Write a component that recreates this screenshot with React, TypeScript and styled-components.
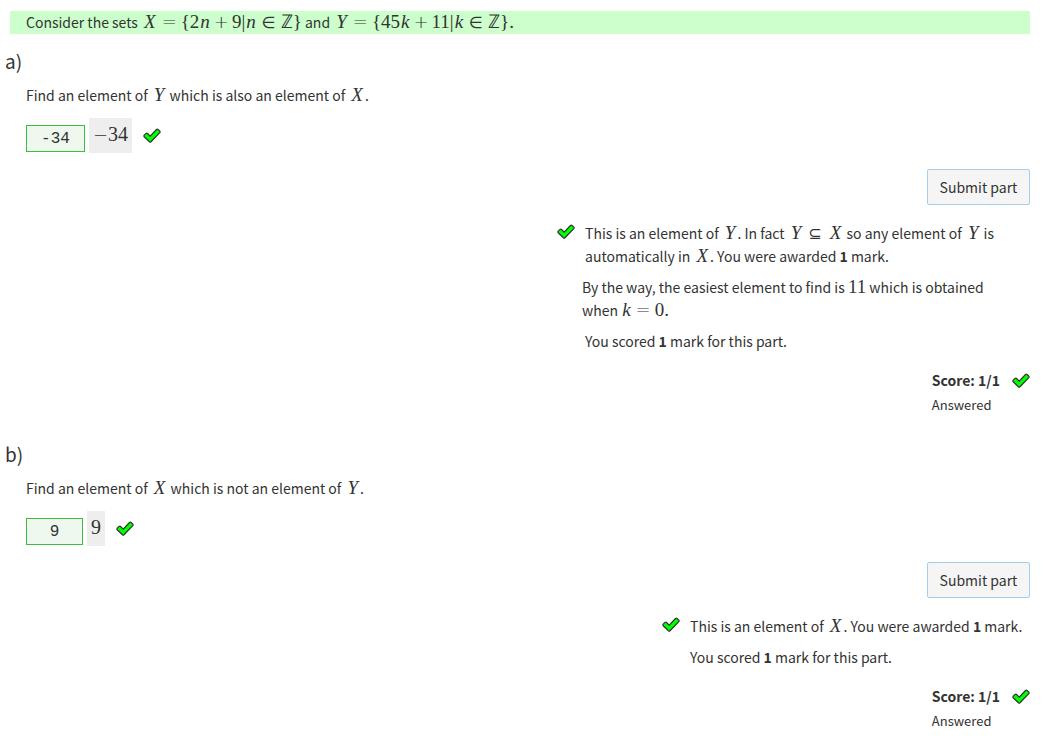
import React from "react";
import styled, { createGlobalStyle } from "styled-components";

const GlobalStyle = createGlobalStyle`
  * { box-sizing: border-box; }
  body {
    margin: 0;
    background: #ffffff;
    color: #333333;
    font-family: "Noto Sans CJK SC", "Noto Sans", sans-serif;
    font-size: 14px;
    line-height: 23px;
  }
`;

const Page = styled.main`
  padding: 11px 27px 0 5px;
`;

const Statement = styled.p`
  margin: 0 0 0 5px;
  padding: 0 16px;
  background: #ccffcc;
`;

const Part = styled.section`
  padding: 14px 0 9px;
`;

const PartTitle = styled.h2`
  margin: 0 0 10px;
  font-size: 19px;
  font-weight: 400;
  line-height: 26px;
`;

const PartBody = styled.div`
  padding-left: 21px;
`;

const Prompt = styled.p`
  margin: 0 0 11px;
`;

const AnswerRow = styled.div`
  display: flex;
  align-items: flex-start;
  gap: 4px;
  height: 35px;
  margin-bottom: 16px;
`;

const AnswerInput = styled.input<{ $width: number }>`
  width: ${(p) => p.$width}px;
  height: 27px;
  margin-top: 7px;
  padding: 0;
  border: 1px solid #3cbe3c;
  background: #eef8ee;
  color: #333333;
  font-family: "Liberation Mono", monospace;
  font-size: 16px;
  text-align: center;
`;

const Preview = styled.output`
  padding: 0 4px;
  background: #eeeeee;
  line-height: 35px;
`;

const RowMark = styled.span`
  display: flex;
  align-items: center;
  height: 35px;
  margin-left: 7px;
`;

const PartFooter = styled.div`
  display: flex;
  flex-direction: column;
  align-items: flex-end;
`;

const SubmitButton = styled.button`
  min-width: 103px;
  height: 36px;
  padding: 0 11px;
  border: 1px solid #a3cfec;
  border-radius: 2px;
  background: #f5f5f5;
  color: #333333;
  font: inherit;
`;

const Feedback = styled.div`
  display: flex;
  gap: 7px;
  max-width: 473px;
  margin-top: 17px;
`;

const FeedbackMark = styled.span`
  display: flex;
  height: 18px;
  align-items: center;
`;

const Messages = styled.div`
  display: flex;
  flex-direction: column;
  gap: 8px;
  min-width: 343px;
`;

const Message = styled.p<{ $indent?: boolean }>`
  margin: 0;
  padding-left: ${(p) => (p.$indent ? 3 : 0)}px;
`;

const Score = styled.div`
  margin-top: 16px;
`;

const ScoreLine = styled.div`
  display: flex;
  align-items: center;
  gap: 12px;
  font-weight: 700;
`;

const Status = styled.div`
  font-size: 13px;
  line-height: 26px;
`;

const MathText = styled.span<{ $large?: boolean }>`
  font-family: "Liberation Serif", serif;
  font-size: ${(p) => (p.$large ? 20 : 19)}px;
  line-height: 1;
  white-space: nowrap;
`;

const Var = styled.i<{ $cap?: boolean }>`
  margin: 0 ${(p) => (p.$cap ? 2 : 1)}px 0 ${(p) => (p.$cap ? 3 : 1)}px;
  font-style: italic;
`;

const Op = styled.span<{ $gap?: number }>`
  margin: 0 ${(p) => p.$gap ?? 0}px;
  font-family: "DejaVu Sans", sans-serif;
  font-size: 18px;
  font-weight: 200;
  line-height: 0;
`;

const Rel = styled.span`
  margin: 0 5px;
  font-family: "DejaVu Sans", sans-serif;
  font-size: 16px;
  line-height: 0;
`;

function Check() {
  return (
    <svg width="18" height="15" viewBox="0 0 18 15" role="img" aria-label="Correct">
      <path
        d="M1.2 7.2 3 5.4Q3.8 4.8 4.6 5.5L7.2 8.1 13.5 1.5Q14.3.8 15.1 1.5L16.8 3.1Q17.4 3.9 16.8 4.7L8 13.7Q7.2 14.4 6.4 13.7L1.2 8.8Q.6 8 1.2 7.2Z"
        fill="#00ff00"
        stroke="#333333"
        strokeWidth="1.2"
      />
    </svg>
  );
}

const X = () => <MathText><Var $cap>X</Var></MathText>;
const Y = () => <MathText><Var $cap>Y</Var></MathText>;

type PartProps = {
  title: string;
  prompt: React.ReactNode;
  answer: string;
  inputWidth: number;
  preview: React.ReactNode;
  children: React.ReactNode;
};

function QuestionPart({ title, prompt, answer, inputWidth, preview, children }: PartProps) {
  return (
    <Part>
      <PartTitle>{title}</PartTitle>
      <PartBody>
        <Prompt>{prompt}</Prompt>
        <AnswerRow>
          <AnswerInput aria-label={`Answer for part ${title}`} defaultValue={answer} $width={inputWidth} />
          <Preview><MathText $large>{preview}</MathText></Preview>
          <RowMark><Check /></RowMark>
        </AnswerRow>
        <PartFooter>
          <SubmitButton type="button">Submit part</SubmitButton>
          <Feedback>
            <FeedbackMark><Check /></FeedbackMark>
            <Messages>
              {children}
              <Message $indent>You scored <b>1</b> mark for this part.</Message>
            </Messages>
          </Feedback>
          <Score>
            <ScoreLine>Score: 1/1 <Check /></ScoreLine>
            <Status>Answered</Status>
          </Score>
        </PartFooter>
      </PartBody>
    </Part>
  );
}

export default function App() {
  return (
    <>
      <GlobalStyle />
      <Page>
        <Statement>
          Consider the sets{" "}
          <MathText>
            <Var $cap>X</Var><Op $gap={4}>=</Op>{"{"}2<Var>n</Var><Op $gap={3}>+</Op>9|<Var>n</Var><Rel>∈</Rel>ℤ{"}"}
          </MathText>{" "}
          and{" "}
          <MathText>
            <Var $cap>Y</Var><Op $gap={4}>=</Op>{"{"}45<Var>k</Var><Op $gap={3}>+</Op>11|<Var>k</Var><Rel>∈</Rel>ℤ{"}"}.
          </MathText>
        </Statement>
        <QuestionPart
          title="a)"
          prompt={<>Find an element of <Y /> which is also an element of <X />.</>}
          answer="-34"
          inputWidth={59}
          preview={<><Op>−</Op>34</>}
        >
          <Message $indent>
            This is an element of <Y />. In fact{" "}
            <MathText><Var $cap>Y</Var><Rel>⊆</Rel><Var $cap>X</Var></MathText> so any element of <Y /> is
            automatically in <X />. You were awarded <b>1</b> mark.
          </Message>
          <Message>
            By the way, the easiest element to find is <MathText>11</MathText> which is obtained
            <br />
            when <MathText><Var>k</Var><Op $gap={4}>=</Op>0.</MathText>
          </Message>
        </QuestionPart>
        <QuestionPart
          title="b)"
          prompt={<>Find an element of <X /> which is not an element of <Y />.</>}
          answer="9"
          inputWidth={57}
          preview="9"
        >
          <Message $indent>
            This is an element of <X />. You were awarded <b>1</b> mark.
          </Message>
        </QuestionPart>
      </Page>
    </>
  );
}
